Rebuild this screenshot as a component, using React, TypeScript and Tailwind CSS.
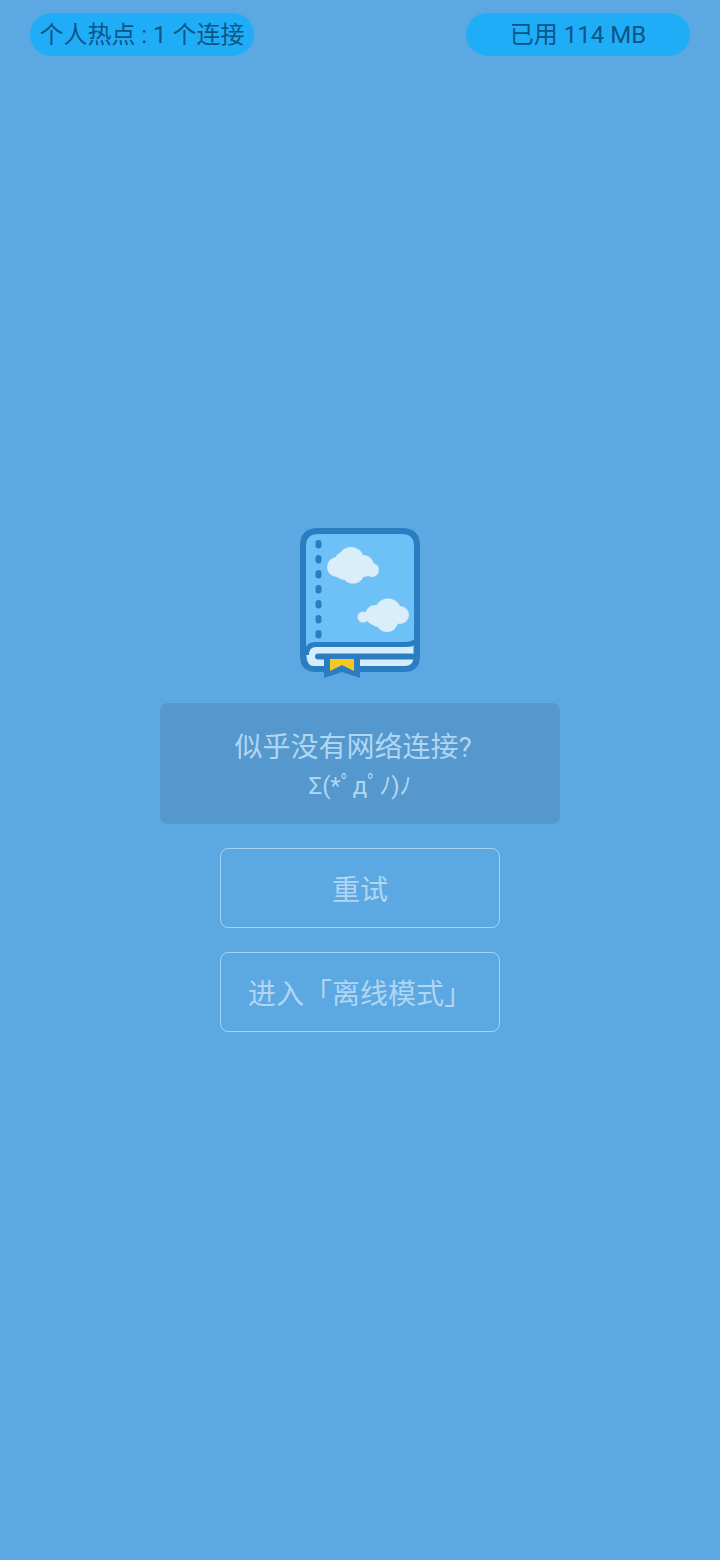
export default function App() {
  const font = { fontFamily: 'Roboto, "Noto Sans CJK SC", sans-serif' };
  return (
    <div style={font} className="w-[720px] h-[1560px] bg-[#5ca8e2] flex flex-col items-center overflow-hidden">
      <div className="w-full flex justify-between px-[30px] pt-[13px]">
        <div className="w-[224px] h-[43px] rounded-full bg-[#20adf8] text-[#0c5587] text-[24px] leading-[45px] text-center whitespace-nowrap">
          个人热点 : 1 个连接
        </div>
        <div className="w-[224px] h-[43px] rounded-full bg-[#20adf8] text-[#0c5587] text-[24px] leading-[45px] text-center whitespace-nowrap">
          已用 114 MB
        </div>
      </div>

      <svg className="mt-[472px] block" width="120" height="152" viewBox="0 0 120 152" fill="none">
        <path d="M3 18 Q3 3 18 3 H102 Q117 3 117 18 V128 Q117 141 104 141 H16 Q3 141 3 128 Z" fill="#6ec1f6" stroke="#2a7dc0" strokeWidth="6" />
        <path d="M7 119 H113 V130 Q113 138 104 138 H14 Q7 138 7 128 Z" fill="#d7edfa" />
        <path d="M4 127 Q4 114 16 114 H104 Q112 114 116 110 V116 Q112 119 104 119 H16 Q9 119 9 127 Z" fill="#2a7dc0" />
        <path d="M18 128.5 H112" stroke="#2a7dc0" strokeWidth="6" strokeLinecap="round" />
        <path d="M24 131 H60 V150 L42 144 L24 150 Z" fill="#2a7dc0" />
        <path d="M30 131 H54 V143 L42 137 L30 143 Z" fill="#f6c822" />
        <g fill="#2a7dc0">
          <rect x="15.5" y="12" width="6" height="8.5" rx="3" />
          <rect x="15.5" y="27" width="6" height="8.5" rx="3" />
          <rect x="15.5" y="42" width="6" height="8.5" rx="3" />
          <rect x="15.5" y="57" width="6" height="8.5" rx="3" />
          <rect x="15.5" y="72" width="6" height="8.5" rx="3" />
          <rect x="15.5" y="87" width="6" height="8.5" rx="3" />
          <rect x="15.5" y="102" width="6" height="8.5" rx="3" />
        </g>
        <g fill="#d9edfa">
          <circle cx="37" cy="39" r="10" />
          <circle cx="44" cy="34" r="10" />
          <circle cx="51" cy="32" r="13" />
          <circle cx="63" cy="38" r="11" />
          <circle cx="72" cy="42" r="7" />
          <circle cx="53" cy="44" r="11.5" />
          <circle cx="44" cy="43" r="9" />
          <circle cx="63" cy="89" r="5.5" />
          <circle cx="75" cy="87" r="10" />
          <circle cx="88" cy="84" r="13.5" />
          <circle cx="100" cy="87" r="9" />
          <circle cx="87" cy="93" r="11" />
          <circle cx="78" cy="90" r="9" />
        </g>
      </svg>

      <div className="mt-[23px] w-[400px] h-[121px] rounded-lg bg-[#5598cd] text-[#b0d6f3] flex flex-col items-center pt-[25px]">
        <div className="text-[28px] leading-[40px] whitespace-nowrap pr-[14px]">似乎没有网络连接?</div>
        <div className="text-[24px] leading-[36px] whitespace-nowrap">Σ(*ﾟдﾟﾉ)ﾉ</div>
      </div>

      <button className="mt-[24px] w-[280px] h-[80px] rounded-lg border border-[#a8d3f2] text-[#b0d6f3] text-[28px] flex items-center justify-center whitespace-nowrap pt-[5px]">
        重试
      </button>
      <button className="mt-[24px] w-[280px] h-[80px] rounded-lg border border-[#a8d3f2] text-[#b0d6f3] text-[28px] flex items-center justify-center whitespace-nowrap pt-[5px]">
        进入「离线模式」
      </button>
    </div>
  );
}
